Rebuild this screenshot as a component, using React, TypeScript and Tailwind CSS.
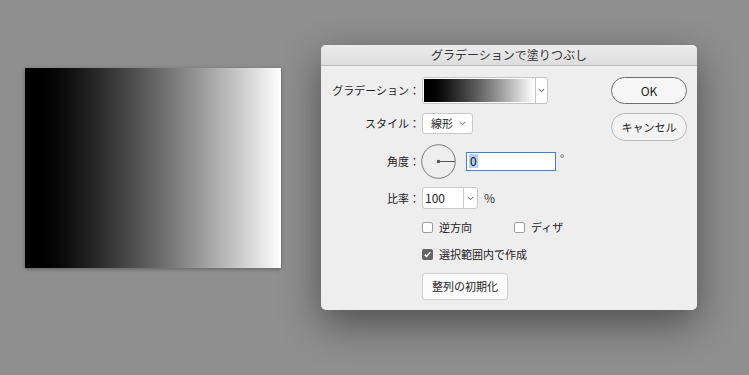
import React from 'react';

function Chevron() {
  return (
    <svg width="7" height="5" viewBox="0 0 7 5" className="text-[#555]">
      <polyline points="0.8,1 3.5,3.7 6.2,1" fill="none" stroke="currentColor" strokeWidth="1" />
    </svg>
  );
}

function Checkbox({ checked }: { checked?: boolean }) {
  if (checked) {
    return (
      <div className="w-[11px] h-[11px] rounded-[2px] bg-[#646464] flex items-center justify-center">
        <svg width="9" height="9" viewBox="0 0 9 9">
          <polyline points="1.8,4.6 3.6,6.6 7.2,2.2" fill="none" stroke="#fff" strokeWidth="1.6" />
        </svg>
      </div>
    );
  }
  return <div className="w-[11px] h-[11px] rounded-[2px] border border-[#9d9d9d] bg-white" />;
}

function Label({ children }: { children: React.ReactNode }) {
  return <div className="w-[99px] text-right text-[11px] leading-none text-[#222]">{children}</div>;
}

export default function App() {
  return (
    <div className="w-[749px] h-[375px] bg-[#8f8f8f] flex items-start overflow-hidden font-['Noto_Sans_CJK_JP',sans-serif]">
      {/* 左の描画結果 */}
      <div className="ml-[25px] mt-[68px] w-[256px] h-[200px] bg-linear-to-r from-black to-white shadow-[0_1px_4px_rgba(0,0,0,0.35)]" />

      {/* ダイアログ */}
      <div className="ml-[40px] mt-[45px] w-[376px] h-[265px] rounded-[5px] bg-[#eeeeee] flex flex-col shadow-[0_14px_40px_rgba(0,0,0,0.45)]">
        <div className="h-[21px] shrink-0 rounded-t-[5px] bg-linear-to-b from-[#ececec] to-[#dddddd] border-b border-[#bdbdbd] flex items-center justify-center text-[12px] leading-none text-[#333]">
          グラデーションで塗りつぶし
        </div>

        <div className="flex pt-[11px]">
          <div className="w-[290px] flex flex-col">
            {/* グラデーション */}
            <div className="h-[27px] flex items-center">
              <Label>グラデーション：</Label>
              <div className="ml-[2px] w-[126px] h-[27px] flex rounded-[3px] border border-[#c4c4c4] bg-white">
                <div className="w-[112px] p-[1px]">
                  <div className="w-full h-full bg-linear-to-r from-black to-white" />
                </div>
                <div className="flex-1 border-l border-[#c4c4c4] flex items-center justify-center">
                  <Chevron />
                </div>
              </div>
            </div>

            {/* スタイル */}
            <div className="mt-[9px] h-[21px] flex items-center">
              <Label>スタイル：</Label>
              <div className="ml-[2px] w-[51px] h-[21px] flex items-center justify-between pl-[8px] pr-[6px] rounded-[3px] border border-[#c8c8c8] bg-white text-[11px] leading-none text-[#222]">
                <span>線形</span>
                <Chevron />
              </div>
            </div>

            {/* 角度 */}
            <div className="mt-[10px] h-[34px] flex items-center">
              <Label>角度：</Label>
              <svg width="35" height="35" viewBox="0 0 35 35" className="ml-[1px]">
                <circle cx="17.5" cy="17.5" r="16.8" fill="none" stroke="#7a7a7a" strokeWidth="1" />
                <line x1="17.5" y1="17.5" x2="34" y2="17.5" stroke="#555" strokeWidth="1" />
                <circle cx="17.5" cy="17.5" r="1.8" fill="#555" />
              </svg>
              <div className="ml-[10px] w-[90px] h-[19px] border border-[#3f7fd5] bg-white flex items-center pl-[2px]">
                <span className="bg-[#b2d2f7] text-[12px] leading-[14px] text-[#111] px-[1px]">0</span>
              </div>
              <span className="ml-[4px] -mt-[6px] text-[11px] leading-none text-[#333]">°</span>
            </div>

            {/* 比率 */}
            <div className="mt-[9px] h-[22px] flex items-center">
              <Label>比率：</Label>
              <div className="ml-[2px] w-[56px] h-[22px] flex rounded-[3px] border border-[#c8c8c8] bg-white">
                <div className="w-[40px] flex items-center pl-[2px] text-[12px] leading-none text-[#222]">100</div>
                <div className="flex-1 border-l border-[#c8c8c8] flex items-center justify-center">
                  <Chevron />
                </div>
              </div>
              <span className="ml-[6px] text-[12px] leading-none text-[#333]">%</span>
            </div>

            {/* チェックボックス */}
            <div className="mt-[10px] h-[16px] pl-[101px] flex items-center text-[11px] leading-none text-[#222]">
              <div className="w-[92px] flex items-center gap-[6px]">
                <Checkbox />
                <span>逆方向</span>
              </div>
              <div className="flex items-center gap-[6px]">
                <Checkbox />
                <span>ディザ</span>
              </div>
            </div>

            <div className="mt-[11px] h-[16px] pl-[101px] flex items-center gap-[6px] text-[11px] leading-none text-[#222]">
              <Checkbox checked />
              <span>選択範囲内で作成</span>
            </div>

            <div className="mt-[11px] pl-[101px]">
              <div className="w-[86px] h-[27px] flex items-center justify-center rounded-[3px] border border-[#cfcfcf] bg-[#fbfbfb] text-[11px] leading-none text-[#222]">
                整列の初期化
              </div>
            </div>
          </div>

          {/* ボタン */}
          <div className="w-[76px] flex flex-col gap-[9px]">
            <div className="h-[27px] rounded-full border border-[#6e6e6e] bg-[#f6f6f6] flex items-center justify-center text-[12px] leading-none text-[#222]">
              OK
            </div>
            <div className="h-[28px] rounded-full border border-[#b9b9b9] bg-[#f3f3f3] flex items-center justify-center text-[11px] leading-none text-[#222]">
              キャンセル
            </div>
          </div>
        </div>
      </div>
    </div>
  );
}
